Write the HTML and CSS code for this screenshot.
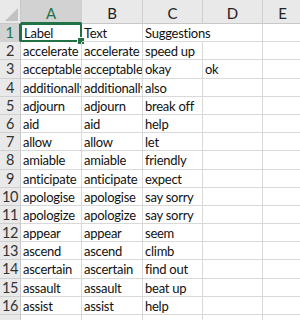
FILE: index.html
```html
<!DOCTYPE html>
<html lang="en">
<head>
    <meta charset="UTF-8">
    <title>Sheet1</title>
    <link rel="stylesheet" href="styles.css">
</head>
<body>
    <div class="sheet">
        <div class="corner"><span class="corner-mark"></span></div>
        <div class="col-head selected">A</div>
        <div class="col-head">B</div>
        <div class="col-head">C</div>
        <div class="col-head">D</div>
        <div class="col-head">E</div>

        <div class="row-head selected">1</div>
        <div class="cell active">Label</div>
        <div class="cell">Text</div>
        <div class="cell spill">Suggestions</div>
        <div class="cell"></div>
        <div class="cell"></div>

        <div class="row-head">2</div>
        <div class="cell">accelerate</div>
        <div class="cell">accelerate</div>
        <div class="cell">speed up</div>
        <div class="cell"></div>
        <div class="cell"></div>

        <div class="row-head">3</div>
        <div class="cell">acceptable</div>
        <div class="cell">acceptable</div>
        <div class="cell">okay</div>
        <div class="cell">ok</div>
        <div class="cell"></div>

        <div class="row-head">4</div>
        <div class="cell">additionally</div>
        <div class="cell">additionally</div>
        <div class="cell">also</div>
        <div class="cell"></div>
        <div class="cell"></div>

        <div class="row-head">5</div>
        <div class="cell">adjourn</div>
        <div class="cell">adjourn</div>
        <div class="cell">break off</div>
        <div class="cell"></div>
        <div class="cell"></div>

        <div class="row-head">6</div>
        <div class="cell">aid</div>
        <div class="cell">aid</div>
        <div class="cell">help</div>
        <div class="cell"></div>
        <div class="cell"></div>

        <div class="row-head">7</div>
        <div class="cell">allow</div>
        <div class="cell">allow</div>
        <div class="cell">let</div>
        <div class="cell"></div>
        <div class="cell"></div>

        <div class="row-head">8</div>
        <div class="cell">amiable</div>
        <div class="cell">amiable</div>
        <div class="cell">friendly</div>
        <div class="cell"></div>
        <div class="cell"></div>

        <div class="row-head">9</div>
        <div class="cell">anticipate</div>
        <div class="cell">anticipate</div>
        <div class="cell">expect</div>
        <div class="cell"></div>
        <div class="cell"></div>

        <div class="row-head">10</div>
        <div class="cell">apologise</div>
        <div class="cell">apologise</div>
        <div class="cell">say sorry</div>
        <div class="cell"></div>
        <div class="cell"></div>

        <div class="row-head">11</div>
        <div class="cell">apologize</div>
        <div class="cell">apologize</div>
        <div class="cell">say sorry</div>
        <div class="cell"></div>
        <div class="cell"></div>

        <div class="row-head">12</div>
        <div class="cell">appear</div>
        <div class="cell">appear</div>
        <div class="cell">seem</div>
        <div class="cell"></div>
        <div class="cell"></div>

        <div class="row-head">13</div>
        <div class="cell">ascend</div>
        <div class="cell">ascend</div>
        <div class="cell">climb</div>
        <div class="cell"></div>
        <div class="cell"></div>

        <div class="row-head">14</div>
        <div class="cell">ascertain</div>
        <div class="cell">ascertain</div>
        <div class="cell">find out</div>
        <div class="cell"></div>
        <div class="cell"></div>

        <div class="row-head">15</div>
        <div class="cell">assault</div>
        <div class="cell">assault</div>
        <div class="cell">beat up</div>
        <div class="cell"></div>
        <div class="cell"></div>

        <div class="row-head">16</div>
        <div class="cell">assist</div>
        <div class="cell">assist</div>
        <div class="cell">help</div>
        <div class="cell"></div>
        <div class="cell"></div>

        <div class="row-head"></div>
        <div class="cell"></div>
        <div class="cell"></div>
        <div class="cell"></div>
        <div class="cell"></div>
        <div class="cell"></div>
    </div>
</body>
</html>
```

FILE: styles.css
```css
* {
    margin: 0;
    padding: 0;
    box-sizing: border-box;
}

body {
    background: #fff;
    font-family: Lato, 'Open Sans', sans-serif;
    overflow: hidden;
}

.sheet {
    display: grid;
    grid-template-columns: 21px 61px 61px 60px 60px 40px;
    grid-template-rows: 24px repeat(17, 18.2px);
    width: 303px;
}

.corner {
    position: relative;
    background: #e9e9e9;
    border-right: 1px solid #c8c8c8;
    border-bottom: 1px solid #c8c8c8;
}

.corner-mark {
    position: absolute;
    right: 2px;
    bottom: 2px;
    width: 0;
    height: 0;
    border-left: 13px solid transparent;
    border-bottom: 13px solid #c2c2c2;
}

.col-head {
    background: #e9e9e9;
    border-right: 1px solid #cfcfcf;
    border-bottom: 1px solid #c8c8c8;
    color: #222;
    font-size: 15px;
    text-align: center;
    line-height: 26px;
}

.col-head.selected {
    background: #d2d2d2;
    color: #217346;
    border-bottom: 2px solid #217346;
}

.row-head {
    background: #e9e9e9;
    border-right: 1px solid #c8c8c8;
    border-bottom: 1px solid #d0d0d0;
    color: #333;
    font-size: 14.5px;
    letter-spacing: -0.3px;
    text-align: center;
    line-height: 18px;
}

.row-head.selected {
    background: #d2d2d2;
    color: #217346;
    border-right: 2px solid #217346;
}

.cell {
    position: relative;
    border-right: 1px solid #d9d9d9;
    border-bottom: 1px solid #d9d9d9;
    padding: 0 2px;
    font-size: 13px;
    letter-spacing: -0.25px;
    line-height: 18px;
    color: #111;
    white-space: nowrap;
    overflow: hidden;
}

.cell.spill {
    overflow: visible;
    border-right-color: transparent;
}

.cell.active {
    overflow: visible;
    padding-left: 3px;
}

.cell.active::before {
    content: "";
    position: absolute;
    left: -1px;
    top: -1px;
    right: -1px;
    bottom: -1px;
    border: 2px solid #217346;
}

.cell.active::after {
    content: "";
    position: absolute;
    right: -4px;
    bottom: -4px;
    width: 6px;
    height: 6px;
    background: #217346;
    border: 1px solid #fff;
}
```
